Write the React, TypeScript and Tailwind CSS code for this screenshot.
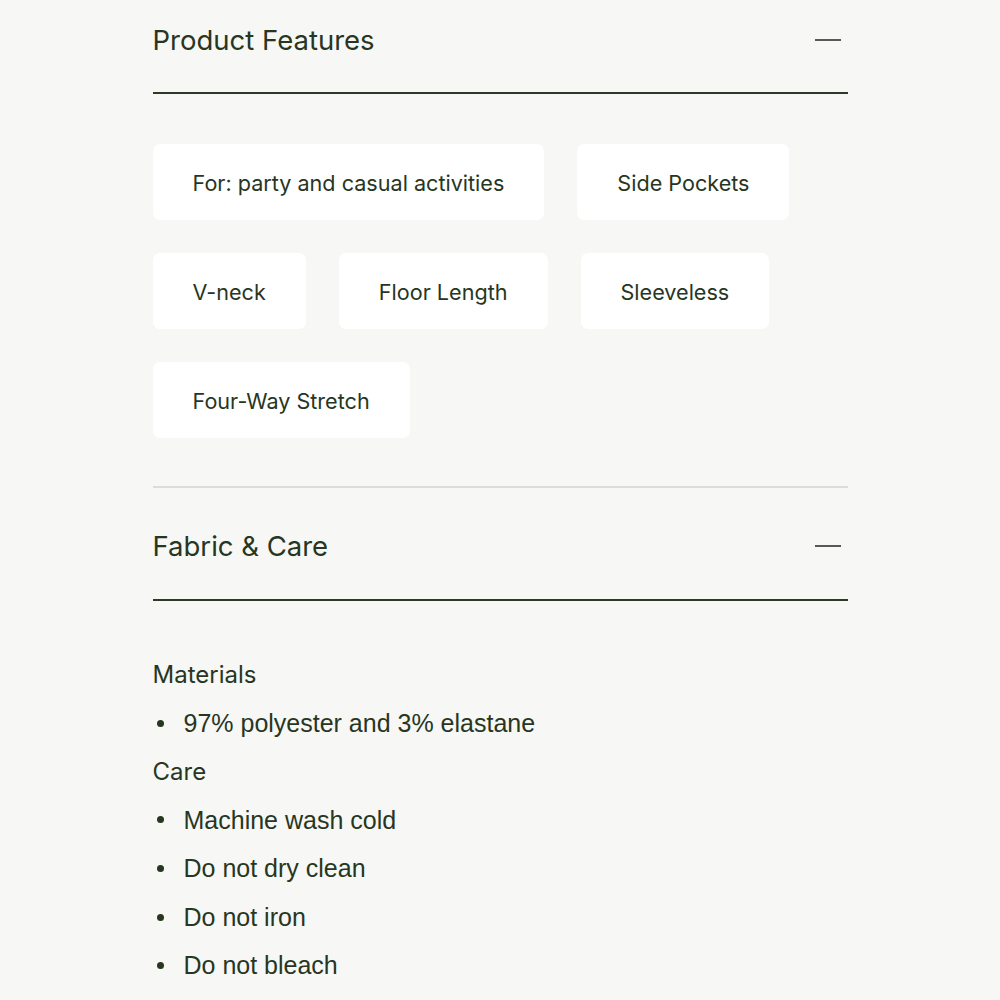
const features = [
  "For: party and casual activities",
  "Side Pockets",
  "V-neck",
  "Floor Length",
  "Sleeveless",
  "Four-Way Stretch",
];

const materials = ["97% polyester and 3% elastane"];
const care = ["Machine wash cold", "Do not dry clean", "Do not iron", "Do not bleach"];

function SectionHeader({ title, first }: { title: string; first?: boolean }) {
  return (
    <div
      className={`flex items-center justify-between border-b-2 border-[#2c3b26] ${
        first ? "pt-[22px] pb-[34px]" : "pt-[40px] pb-[35px]"
      }`}
    >
      <h2 className="font-['Inter',sans-serif] text-[27.5px] leading-[36px] font-normal text-[#27361f]">
        {title}
      </h2>
      <span className="mr-[7px] block h-[2px] w-[26px] bg-[#585858]" />
    </div>
  );
}

function Bullet({ text }: { text: string }) {
  return (
    <li className="flex items-center leading-[48.6px]">
      <span className="ml-[4px] mr-[20px] block h-[7px] w-[7px] rounded-full bg-[#27361f]" />
      <span>{text}</span>
    </li>
  );
}

export default function App() {
  return (
    <div className="min-h-screen w-full bg-[#f7f7f6]">
      <div className="mx-auto w-[695px] pb-10">
        <SectionHeader title="Product Features" first />

        <div className="flex flex-wrap gap-[33px] pt-[50px] pb-[48px]">
          {features.map((f) => (
            <div
              key={f}
              className="flex h-[76px] items-center rounded-[7px] bg-white px-10 pt-[2px] font-['Inter',sans-serif] text-[21.6px] text-[#27361f]"
            >
              {f}
            </div>
          ))}
        </div>

        <div className="border-t-2 border-[#dcdcdb]">
          <SectionHeader title="Fabric & Care" />
        </div>

        <div className="pt-[50px] text-[#27361f]">
          <p className="font-['Inter',sans-serif] text-[24px] leading-[48px]">Materials</p>
          <ul className="font-['Liberation_Sans',Arial,sans-serif] text-[25px]">
            {materials.map((m) => (
              <Bullet key={m} text={m} />
            ))}
          </ul>
          <p className="font-['Inter',sans-serif] text-[24px] leading-[48px]">Care</p>
          <ul className="font-['Liberation_Sans',Arial,sans-serif] text-[25px]">
            {care.map((c) => (
              <Bullet key={c} text={c} />
            ))}
          </ul>
        </div>
      </div>
    </div>
  );
}
